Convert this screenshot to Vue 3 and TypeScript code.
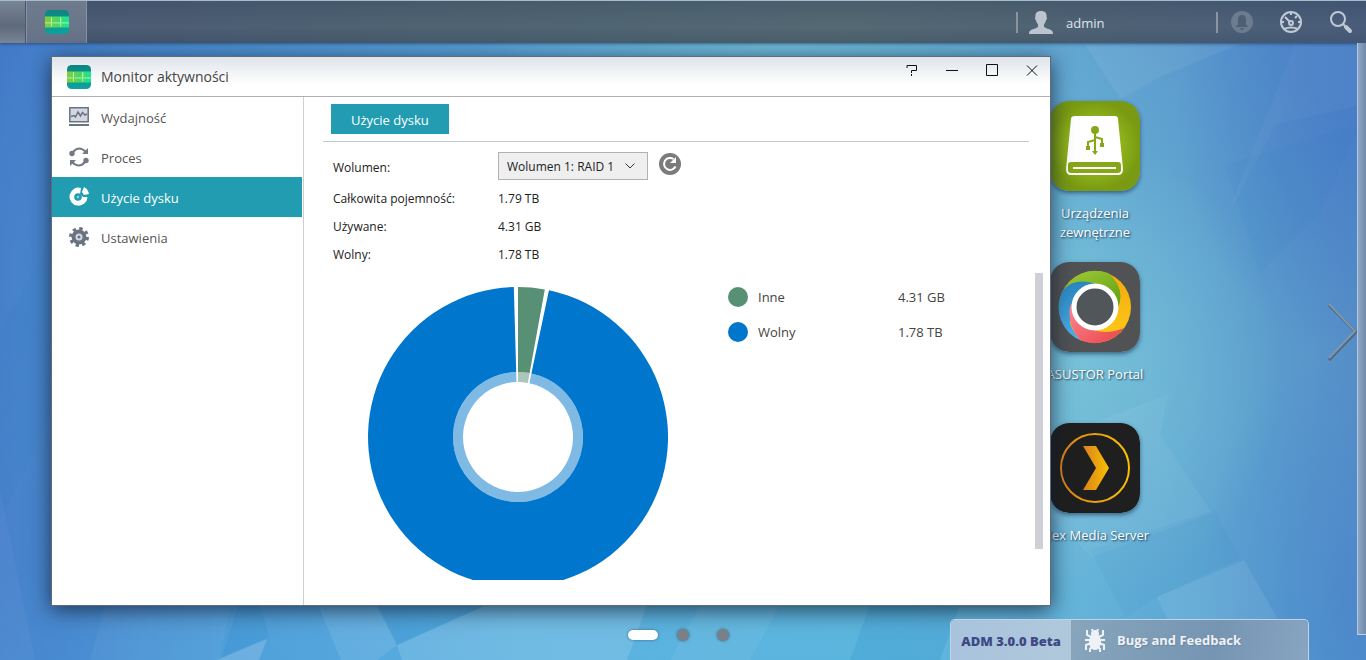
<script setup lang="ts">
import { ref } from 'vue'

interface Slice {
  label: string
  value: string
  color: string
  from: number
  to: number
}

const slices: Slice[] = [
  { label: 'Inne', value: '4.31 GB', color: '#579075', from: 0, to: 10.3 },
  { label: 'Wolny', value: '1.78 TB', color: '#0076cc', from: 11.9, to: 358.4 },
]

const details = [
  { label: 'Całkowita pojemność:', value: '1.79 TB' },
  { label: 'Używane:', value: '4.31 GB' },
  { label: 'Wolny:', value: '1.78 TB' },
]

const sections = [
  { id: 'performance', label: 'Wydajność' },
  { id: 'process', label: 'Proces' },
  { id: 'disk', label: 'Użycie dysku' },
  { id: 'settings', label: 'Ustawienia' },
]

const active = ref('disk')
const volume = ref('1')
const page = ref(0)

function point(radius: number, angle: number): string {
  const a = (angle * Math.PI) / 180
  return `${(150 + radius * Math.sin(a)).toFixed(2)} ${(150 - radius * Math.cos(a)).toFixed(2)}`
}

function ring(inner: number, outer: number, s: Slice): string {
  const large = s.to - s.from > 180 ? 1 : 0
  return (
    `M${point(outer, s.from)}A${outer} ${outer} 0 ${large} 1 ${point(outer, s.to)}` +
    `L${point(inner, s.to)}A${inner} ${inner} 0 ${large} 0 ${point(inner, s.from)}Z`
  )
}
</script>

<template>
  <div class="screen">
    <svg class="wallpaper" viewBox="0 0 1366 660" preserveAspectRatio="none" aria-hidden="true">
      <defs>
        <linearGradient id="sky" x1="0" y1="0" x2="1" y2="0">
          <stop offset="0" stop-color="#4279c8" />
          <stop offset="0.1" stop-color="#4a8ed2" />
          <stop offset="0.38" stop-color="#5fb0de" />
          <stop offset="0.62" stop-color="#5fb6da" />
          <stop offset="0.79" stop-color="#6ab2d5" />
          <stop offset="0.92" stop-color="#5a99cb" />
          <stop offset="1" stop-color="#5287c4" />
        </linearGradient>
        <linearGradient id="low" x1="0" y1="0" x2="0" y2="1">
          <stop offset="0" stop-color="#3f6fc4" stop-opacity="0.25" />
          <stop offset="0.5" stop-color="#6cc0dc" stop-opacity="0.1" />
          <stop offset="1" stop-color="#4fb3e6" stop-opacity="0.3" />
        </linearGradient>
        <radialGradient id="teal" cx="0.5" cy="0.5" r="0.5">
          <stop offset="0" stop-color="#79c3d8" stop-opacity="0.8" />
          <stop offset="1" stop-color="#79c3d8" stop-opacity="0" />
        </radialGradient>
        <radialGradient id="deep" cx="0.5" cy="0.5" r="0.5">
          <stop offset="0" stop-color="#477cc8" stop-opacity="0.9" />
          <stop offset="1" stop-color="#477cc8" stop-opacity="0" />
        </radialGradient>
      </defs>
      <rect width="1366" height="660" fill="url(#sky)" />
      <rect width="1366" height="660" fill="url(#low)" />
      <ellipse cx="1080" cy="370" rx="200" ry="230" fill="url(#teal)" />
      <ellipse cx="780" cy="40" rx="300" ry="60" fill="url(#teal)" />
      <ellipse cx="1366" cy="100" rx="190" ry="260" fill="url(#deep)" />
      <ellipse cx="1366" cy="600" rx="170" ry="260" fill="url(#deep)" opacity="0.600" />
      <ellipse cx="0" cy="560" rx="240" ry="260" fill="url(#deep)" opacity="0.6" />
      <g fill="#fff">
        <path d="M1085 44l35 55 40-22 80-33z" opacity="0.06" />
        <path d="M1230 207l65-163h71v60l-90 20-42 80z" opacity="0.03" />
        <path d="M1140 405l28-10-8 40 52 78-120 44-42-40V440z" opacity="0.05" />
        <path d="M1157 597l87-37 40 70v30h-97z" opacity="0.08" />
        <path d="M0 490l35 170H0z" opacity="0.04" />
        <path d="M90 660l15-55h125l-10 55z" opacity="0.04" />
        <path d="M217 660l50-21-8 21z" opacity="0.16" />
        <path d="M318 605h60l19 40-20 15h-36z" opacity="0.09" />
        <path d="M397 645l90-40h160l-20 55H402z" opacity="0.13" />
        <path d="M700 605l-30 55h80l30-55z" opacity="0.06" />
      </g>
      <g fill="#1b7fc0">
        <path d="M0 330l52-90v170L0 520z" opacity="0.05" />
        <path d="M1090 550l125-40 25 48-85 40-30 20z" opacity="0.06" />
        <path d="M1225 165l135-42-40 90-60 60z" opacity="0.05" />
        <path d="M850 660l20-55h90l-20 55z" opacity="0.16" />
        <path d="M222 657l16-52h22l9 32z" opacity="0.14" />
        <path d="M376 605h110l-89 40z" opacity="0.18" />
      </g>
    </svg>

    <header class="taskbar">
      <button class="menu-edge" type="button" aria-label="Menu"></button>
      <button class="task" type="button" aria-label="Monitor aktywności">
        <svg class="app-icon" viewBox="0 0 26 26" aria-hidden="true">
          <defs>
            <linearGradient id="band"><stop offset="0" stop-color="#86cb3c" /><stop offset="0.5" stop-color="#4fd565" /><stop offset="1" stop-color="#16e39a" /></linearGradient>
            <linearGradient id="tile" x1="0" y1="0" x2="0" y2="1"><stop offset="0" stop-color="#0d8580" /><stop offset="1" stop-color="#0da39f" /></linearGradient>
          </defs>
          <rect width="26" height="26" rx="5" fill="url(#tile)" />
          <rect y="7" width="26" height="12" fill="url(#band)" />
          <path d="M0 14h7V8M7 8v10M8 14h9V8M17 8v10M18 14h8" fill="none" stroke="#b9f7a0" />
        </svg>
      </button>
      <div class="user">
        <svg viewBox="0 0 24 23" width="24" height="23" aria-hidden="true">
          <path fill="#bcc5cf" d="M12 0c4 0 6 2 5.600 6.200.8.300.4 2.500-.6 3-.3 1.700-1 3-2 4v2.600c1.500 1.500 4 1.900 6.500 2.900 1.900.800 2.500 2 2.500 4.300H0c0-2.300.6-3.500 2.500-4.300C5 17.700 7.500 17.300 9 15.800v-2.600c-1-1-1.700-2.300-2-4-1-.5-1.400-2.700-.6-3C6 2 8 0 12 0z" />
        </svg>
        <span>admin</span>
      </div>
      <div class="tools">
        <button type="button" aria-label="Powiadomienia">
          <svg viewBox="0 0 24 24" width="24" height="24">
            <circle cx="12" cy="12" r="11" fill="#6c7c8f" />
            <path fill="#4d5f74" d="M12 5c3 0 4 2 4 5v4l2 3H6l2-3v-4c0-3 1-5 4-5zm-2 13h4l-1 2h-2z" />
          </svg>
        </button>
        <button type="button" aria-label="Wydajność">
          <svg viewBox="0 0 24 24" width="24" height="24" fill="none" stroke="#c1cad4">
            <circle cx="12" cy="12" r="10" stroke-width="2" />
            <path stroke-width="2" d="M12 2v3M2 12h3M19 12h3M18 6l-2 2M6 7l5 5" />
            <circle cx="12" cy="13" r="2" stroke-width="2" />
            <path d="M5 19q7-3 14 0" stroke-width="2" />
          </svg>
        </button>
        <button type="button" aria-label="Szukaj">
          <svg viewBox="0 0 24 24" width="24" height="24" fill="none" stroke="#c1cad4">
            <circle cx="9" cy="9" r="7" stroke-width="2" />
            <path stroke-width="2" d="M14 14l3 3" />
            <path stroke-width="4" stroke-linecap="round" d="M17 17l4 4" />
          </svg>
        </button>
      </div>
    </header>

    <main class="desktop">
      <nav class="shortcuts" aria-label="Aplikacje">
        <a href="#external" class="shortcut">
          <svg viewBox="0 0 90 90" aria-hidden="true">
            <defs>
              <radialGradient id="lime"><stop offset="0.5" stop-color="#93b81c" /><stop offset="1" stop-color="#799a12" /></radialGradient>
            </defs>
            <rect width="90" height="90" rx="19" fill="url(#lime)" />
            <path fill="#fff" d="M25 15h40q3 0 3 3l5 50q0 6-5 6H21q-5 0-5-6l5-50q0-3 4-3z" />
            <rect x="18" y="61" width="53" height="11" rx="3" fill="#86a818" />
            <path stroke="#fff" stroke-width="2" d="M23 67h43" />
            <g fill="none" stroke="#86a818" stroke-width="2"><path d="M45 27v24M45 39l-7 2v6M45 36l7 2v6" /></g>
            <circle cx="45" cy="29" r="4" fill="#86a818" />
            <path fill="#86a818" d="M36 45h4v4h-4zM50 42h4v4h-4zM42 50h6l-3 4z" />
          </svg>
          <span>Urządzenia zewnętrzne</span>
        </a>
        <a href="#portal" class="shortcut">
          <svg viewBox="0 0 90 90" aria-hidden="true">
            <defs>
              <linearGradient id="lg" x1="0" y1="0" x2="1" y2="1"><stop offset="0" stop-color="#a5cd37" /><stop offset="1" stop-color="#5d9e13" /></linearGradient>
              <linearGradient id="ly" x1="0" y1="0" x2="0" y2="1"><stop offset="0" stop-color="#f2a80c" /><stop offset="1" stop-color="#ffcb18" /></linearGradient>
              <linearGradient id="lr" x1="0" y1="0" x2="1" y2="1"><stop offset="0" stop-color="#ff8d9c" /><stop offset="1" stop-color="#e94345" /></linearGradient>
              <linearGradient id="lb" x1="0" y1="0" x2="0" y2="1"><stop offset="0" stop-color="#2a86bf" /><stop offset="1" stop-color="#4cb2ee" /></linearGradient>
            </defs>
            <rect width="90" height="90" rx="19" fill="#505254" />
            <circle cx="45" cy="45" r="36" fill="url(#ly)" />
            <path fill="url(#lg)" d="M12 31A36 36 0 0 1 58 11Q76 26 68 46H45Q35 20 12 31z" />
            <path fill="url(#lb)" d="M32 79A36 36 0 0 1 13 28Q25 15 46 22L45 45Q18 50 20 61Q23 71 32 79z" />
            <path fill="url(#lr)" d="M20 45Q23 32 45 45L44 68Q57 73 74 66A36 36 0 0 1 30 78Q17 63 20 45z" />
            <circle cx="45" cy="45" r="21" fill="#505659" stroke="#fff" stroke-width="5" />
          </svg>
          <span>ASUSTOR Portal</span>
        </a>
        <a href="#plex" class="shortcut">
          <svg viewBox="0 0 90 90" aria-hidden="true">
            <defs>
              <linearGradient id="gold"><stop offset="0" stop-color="#d8811d" /><stop offset="1" stop-color="#fcc000" /></linearGradient>
            </defs>
            <rect width="90" height="90" rx="19" fill="#1f1f1f" />
            <circle cx="45" cy="45" r="34" fill="none" stroke="url(#gold)" stroke-width="2" />
            <path fill="url(#gold)" d="M33 23h13l13 22-13 22H33l13-22z" />
          </svg>
          <span>Plex Media Server</span>
        </a>
      </nav>

      <section class="window" aria-label="Monitor aktywności">
        <header class="titlebar">
          <svg class="app-icon" viewBox="0 0 26 26" aria-hidden="true">
            <rect width="26" height="26" rx="5" fill="url(#tile)" />
            <rect y="7" width="26" height="12" fill="url(#band)" />
            <path d="M0 14h7V8M7 8v10M8 14h9V8M17 8v10M18 14h8" fill="none" stroke="#b9f7a0" />
          </svg>
          <h1>Monitor aktywności</h1>
          <div class="controls">
            <button type="button" aria-label="Pomoc">
              <svg viewBox="0 0 12 12"><path d="M1 4V1.500h9.500v5h-5V9M5.500 10v2" /></svg>
            </button>
            <button type="button" aria-label="Minimalizuj">
              <svg viewBox="0 0 12 12"><path d="M0 6.500h12" /></svg>
            </button>
            <button type="button" aria-label="Maksymalizuj">
              <svg viewBox="0 0 12 12"><path d="M.5.5h11v11H.5z" /></svg>
            </button>
            <button type="button" aria-label="Zamknij">
              <svg viewBox="0 0 12 12"><path d="M1 1.500l10 10M11 1.500l-10 10" /></svg>
            </button>
          </div>
        </header>

        <div class="body">
          <nav class="sidebar" aria-label="Sekcje">
            <button
              v-for="s in sections"
              :key="s.id"
              type="button"
              :class="['section', { active: active === s.id }]"
              @click="active = s.id"
            >
              <svg v-if="s.id === 'performance'" viewBox="0 0 20 20" aria-hidden="true">
                <path fill="#d3d7e1" stroke="#6b7280" stroke-width="1.500" d="M.8.800h18.400v14H.8z" />
                <path fill="none" stroke="#6b7280" stroke-width="1.500" d="M2 9.500l3-1 1.500 1.500L9 5l2.500 4 2-3.500L16 8l2-1" />
                <path stroke="#6b7280" stroke-width="2" d="M0 18h20" />
              </svg>
              <svg v-else-if="s.id === 'process'" viewBox="0 0 20 20" aria-hidden="true">
                <g fill="none" stroke="#737a86" stroke-width="2"><path d="M4 5q6-7 13 0M3 15q7 7 13 0" /></g>
                <path fill="#737a86" d="M19 1v6h-6zM1 19v-6h6z" />
                <circle cx="3" cy="6.500" r="2.700" fill="#737a86" /><circle cx="17" cy="13.500" r="2.700" fill="#737a86" />
              </svg>
              <svg v-else-if="s.id === 'disk'" viewBox="0 0 20 20" aria-hidden="true">
                <path fill="#fff" d="M12 1a9 9 0 1 0 6.500 9H14L11 7z" />
                <path fill="#fff" d="M15 0q4 2 5 7l-5 1-2-3z" />
                <circle cx="9" cy="10" r="3.800" fill="#219cb1" /><circle cx="9" cy="10" r="1.300" fill="#fff" opacity="0.500" />
              </svg>
              <svg v-else viewBox="0 0 20 20" aria-hidden="true">
                <circle cx="10" cy="10" r="8.500" fill="none" stroke="#6b7280" stroke-width="3" stroke-dasharray="3.340 3.340" />
                <circle cx="10" cy="10" r="5.500" fill="#d3d7e1" stroke="#6b7280" stroke-width="4" />
                <circle cx="10" cy="10" r="1.500" fill="#6b7280" />
              </svg>
              <span>{{ s.label }}</span>
            </button>
          </nav>

          <div class="content">
            <div class="tabs"><button class="tab" type="button">Użycie dysku</button></div>
            <div class="scroll">
              <div class="volume">
                <label for="volume">Wolumen:</label>
                <div class="select">
                  <select id="volume" v-model="volume">
                    <option value="1">Wolumen 1: RAID 1</option>
                  </select>
                  <svg viewBox="0 0 10 6" aria-hidden="true"><path d="M.5.5L5 5 9.500.5" fill="none" stroke="#333" /></svg>
                </div>
                <button class="refresh" type="button" aria-label="Odśwież">
                  <svg viewBox="0 0 22 22">
                    <circle cx="11" cy="11" r="11" fill="#7b7b7b" />
                    <path fill="none" stroke="#fff" stroke-width="2" d="M16.500 13.500a6 6 0 1 1-2-7.500" />
                    <path fill="#fff" d="M17 4v6h-6z" />
                  </svg>
                </button>
              </div>
              <dl class="details">
                <div v-for="d in details" :key="d.label">
                  <dt>{{ d.label }}</dt>
                  <dd>{{ d.value }}</dd>
                </div>
              </dl>
              <div class="usage">
                <svg class="donut" viewBox="0 0 300 300" role="img" aria-label="Użycie dysku">
                  <g v-for="s in slices" :key="s.label" :fill="s.color">
                    <path :d="ring(65, 150, s)" />
                    <path :d="ring(55, 65, s)" opacity="0.500" />
                  </g>
                </svg>
                <ul class="legend">
                  <li v-for="s in slices" :key="s.label">
                    <i :style="{ background: s.color }"></i>
                    <span>{{ s.label }}</span>
                    <span>{{ s.value }}</span>
                  </li>
                </ul>
              </div>
            </div>
            <div class="thumb"></div>
          </div>
        </div>
      </section>

      <div class="pager">
        <button
          v-for="n in 3"
          :key="n"
          type="button"
          :aria-label="`Pulpit ${n}`"
          :class="{ current: page === n - 1 }"
          @click="page = n - 1"
        ><i></i></button>
      </div>

      <div class="beta">
        <strong>ADM 3.0.0 Beta</strong>
        <a href="#feedback">
          <svg viewBox="0 0 22 24" width="22" height="24" aria-hidden="true">
            <ellipse cx="11" cy="14" rx="6" ry="8" fill="#eef2f6" />
            <circle cx="11" cy="6" r="4" fill="#eef2f6" />
            <path fill="none" stroke="#eef2f6" stroke-width="2" d="M9 4L8 1M13 4l1-3M7 9L3 7V2M15 9l4-2V2M7 12H1M15 12h6M7 15l-5 2v5M15 15l5 2v5M8 19l-2 2v3M14 19l2 2v3" />
          </svg>
          <span>Bugs and Feedback</span>
        </a>
      </div>

      <button class="next" type="button" aria-label="Następny pulpit">
        <svg viewBox="0 0 30 60" width="30" height="60">
          <path d="M2 3l27 27L2 58" fill="none" stroke="#51677d" stroke-width="3" />
          <path d="M2 2l26 27L2 56" fill="none" stroke="#7f97ad" stroke-width="2" />
        </svg>
      </button>
      <div class="drawer"></div>
    </main>
  </div>
</template>

<style>
body {
  margin: 0;
}
</style>

<style scoped>
.screen {
  position: relative;
  display: flex;
  flex-direction: column;
  height: 100vh;
  overflow: hidden;
  font-family: "Open Sans", "Noto Sans", sans-serif;
  font-size: 13px;
  line-height: 20px;
  color: #222;
}
button {
  padding: 0;
  border: 0;
  background: none;
  color: inherit;
  font: inherit;
}
a {
  color: inherit;
  text-decoration: none;
}
.wallpaper {
  position: absolute;
  inset: 0;
  width: 100%;
  height: 100%;
}
.app-icon {
  width: 24px;
  height: 24px;
}

.taskbar {
  position: relative;
  display: flex;
  align-items: stretch;
  height: 42px;
  border-top: 1px solid #a3bdcf;
  background:
    linear-gradient(rgba(20, 30, 60, 0.1), rgba(255, 255, 255, 0.02) 60%, rgba(20, 30, 60, 0.08)),
    linear-gradient(90deg, #475772, #4b6070 30%, #506670 62%, #4b5f73 82%, #465a78);
  box-shadow: 0 1px 3px rgba(20, 50, 90, 0.6);
  color: #dfe5ec;
}
.menu-edge {
  width: 25px;
  background: linear-gradient(#7a8594, #5d697c 60%, #7a8594);
}
.task {
  width: 61px;
  margin-left: 1px;
  border-right: 1px solid #8691a1;
  border-left: 1px solid #8691a1;
  background: linear-gradient(#6f7b8d, #667287);
}
.task .app-icon {
  display: block;
  margin: auto;
}
.user {
  display: flex;
  align-items: center;
  gap: 12px;
  width: 200px;
  margin-left: auto;
}
.user span {
  padding-top: 2px;
}
.user::before,
.tools::before {
  content: "";
  width: 2px;
  height: 21px;
  background: #8c959f;
}
.user svg {
  margin-right: 1px;
  margin-left: -1px;
}
.tools {
  display: flex;
  align-items: center;
  width: 150px;
}
.tools button {
  width: 50px;
  height: 26px;
}
.tools button svg {
  display: block;
  margin: 0 12px;
}

.desktop {
  position: relative;
  flex: 1;
  display: flex;
  justify-content: flex-end;
}
.shortcuts {
  display: flex;
  flex-direction: column;
  width: 120px;
  margin: 58px 211px 0 0;
}
.shortcut {
  display: flex;
  flex-direction: column;
  align-items: center;
  gap: 13px;
  height: 161px;
  color: #fff;
  font-size: 13px;
  line-height: 19px;
  text-align: center;
  white-space: nowrap;
  text-shadow: 1px 1px 2px rgba(0, 30, 60, 0.8);
}
.shortcut:first-child span {
  width: 80px;
  white-space: normal;
}
.shortcut svg {
  width: 90px;
  height: 90px;
  border-radius: 19px;
  box-shadow: 0 2px 4px rgba(0, 20, 50, 0.5);
}

.window {
  position: absolute;
  inset: 13px 315px 54px 51px;
  display: flex;
  flex-direction: column;
  border: 1px solid #5f6b77;
  background: #fff;
  box-shadow: 0 4px 20px rgba(15, 25, 45, 0.75);
}
.titlebar {
  display: flex;
  align-items: center;
  gap: 10px;
  height: 39px;
  padding: 0 6px 0 15px;
  border-bottom: 1px solid #adb0b3;
  background: linear-gradient(#dfe4ea, #fff 70%);
}
.titlebar h1 {
  margin: 0;
  color: #444;
  font-size: 14px;
  font-weight: 400;
  line-height: 18px;
}
.controls {
  display: flex;
  gap: 16px;
  align-self: flex-start;
  margin-left: auto;
}
.controls button {
  width: 24px;
  height: 26px;
}
.controls svg {
  display: block;
  width: 12px;
  height: 12px;
  margin: 0 auto;
  fill: none;
  stroke: #111;
}
.body {
  flex: 1;
  display: flex;
  min-height: 0;
}
.sidebar {
  display: flex;
  flex-direction: column;
  width: 250px;
  padding-right: 1px;
  border-right: 1px solid #cdd0d3;
}
.section {
  display: flex;
  align-items: center;
  gap: 12px;
  height: 40px;
  padding: 2px 17px 0;
  color: #555;
  font-size: 13px;
}
.section.active {
  background: #219cb1;
  color: #fff;
}
.section svg {
  width: 20px;
  height: 20px;
  margin-top: -2px;
}
.content {
  position: relative;
  flex: 1;
  display: flex;
  flex-direction: column;
  min-width: 0;
  padding: 7px 21px 25px 19px;
}
.tabs {
  height: 37px;
  padding-left: 8px;
  border-bottom: 1px solid #bfc9cd;
}
.tab {
  height: 30px;
  padding: 2px 20px 0;
  background: #219cb1;
  color: #fff;
}
.scroll {
  flex: 1;
  min-height: 0;
  padding: 10px 10px 0;
  overflow: hidden;
  font-size: 12px;
}
.volume {
  display: flex;
  height: 33px;
}
.volume label {
  width: 165px;
  line-height: 32px;
}
.select {
  position: relative;
  width: 150px;
}
.select select {
  appearance: none;
  box-sizing: border-box;
  width: 100%;
  height: 28px;
  padding: 2px 8px 0;
  border: 1px solid #b1b1b1;
  border-radius: 0;
  background: #efefef;
  color: #222;
  font: inherit;
}
.select svg {
  position: absolute;
  top: 11px;
  right: 13px;
  width: 10px;
  height: 6px;
  pointer-events: none;
}
.refresh {
  width: 22px;
  height: 22px;
  margin: 1px 0 0 11px;
}
.refresh svg {
  display: block;
}
.details {
  margin: 0;
}
.details div {
  display: flex;
  height: 28px;
  line-height: 28px;
}
.details dt {
  width: 165px;
}
.details dd {
  margin: 0;
}
.usage {
  display: flex;
  align-items: flex-start;
  gap: 60px;
  padding: 18px 0 0 35px;
}
.donut {
  flex: none;
  width: 300px;
  height: 300px;
}
.legend {
  margin: 0;
  padding: 0;
  color: #444;
  font-size: 13px;
  list-style: none;
}
.legend li {
  display: flex;
  align-items: center;
  height: 20px;
  margin-bottom: 15px;
}
.legend i {
  width: 20px;
  height: 20px;
  margin-right: 10px;
  border-radius: 50%;
}
.legend i + span {
  width: 140px;
}
.thumb {
  position: absolute;
  top: 176px;
  right: 7px;
  width: 8px;
  height: 276px;
  background: #cfcfd7;
}

.pager {
  position: absolute;
  bottom: 15px;
  left: 50%;
  display: flex;
  transform: translateX(-50%);
}
.pager button {
  display: flex;
  align-items: center;
  justify-content: center;
  width: 40px;
  height: 20px;
}
.pager i {
  width: 12px;
  height: 12px;
  border-radius: 6px;
  background: #7b8088;
  box-shadow: 0 0 3px #38678c;
}
.pager .current i {
  width: 30px;
  height: 10px;
  background: #fff;
}
.beta {
  position: absolute;
  right: 57px;
  bottom: 0;
  display: flex;
  height: 40px;
  border: 1px solid #bfd3e4;
  border-bottom: 0;
  border-radius: 5px 5px 0 0;
  overflow: hidden;
  font-size: 13px;
  font-weight: 700;
  line-height: 42px;
}
.beta strong {
  width: 120px;
  background: linear-gradient(90deg, #a9c3de, #b0c8da);
  color: #3c4a86;
  text-align: center;
}
.beta a {
  display: flex;
  align-items: center;
  gap: 11px;
  width: 224px;
  padding-left: 13px;
  background: linear-gradient(100deg, #87a5bb, #7695b3 60%, #87a5c1);
  color: #eef2f6;
  text-shadow: 1px 1px 1px #6b869f;
}
.next {
  position: absolute;
  top: 259px;
  right: 9px;
}
.next svg {
  display: block;
}
.drawer {
  position: absolute;
  top: 0;
  right: 0;
  bottom: 25px;
  width: 8px;
  border-bottom: 1px solid #bcd0e4;
  border-left: 1px solid #b4c9df;
  background: linear-gradient(90deg, #8fa6c3, #7089aa);
}
</style>
